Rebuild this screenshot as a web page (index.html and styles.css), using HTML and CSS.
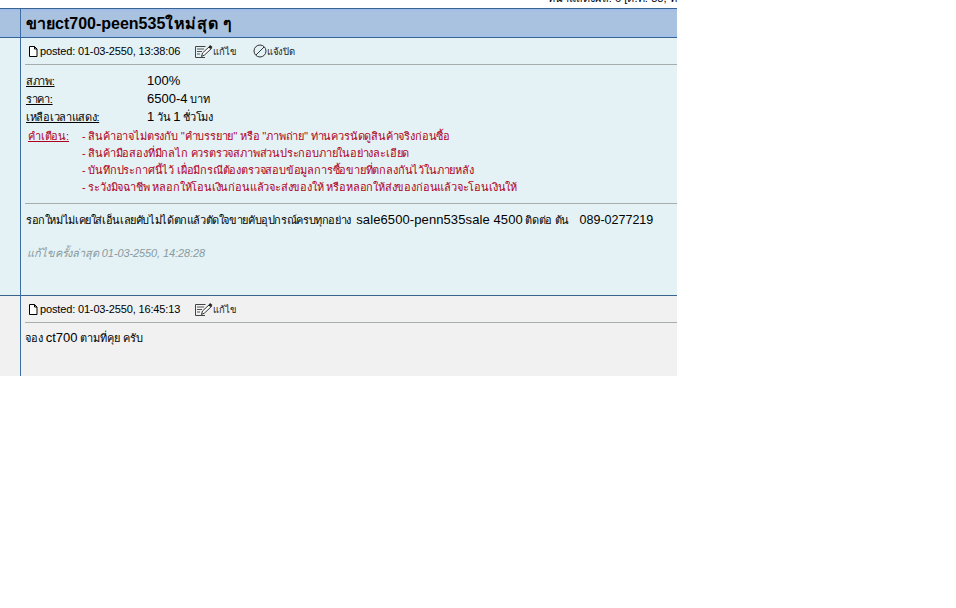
FILE: index.html
```html
<!DOCTYPE html>
<html lang="th">
<head>
    <meta charset="UTF-8">
    <meta name="viewport" content="width=device-width, initial-scale=1.0">
    <title>ขายct700-peen535ใหม่สุดๆ</title>
    <link rel="stylesheet" href="styles.css">
</head>
<body>
    <div class="board">
        <div class="page-info"><span>หน้าแสดงผล: 6 [ต.ค. 88, ท</span></div>

        <div class="row row-title">
            <div class="side"></div>
            <h1 class="title">ขายct700-peen535<span class="title-end">ใหม่สุด ๆ</span></h1>
        </div>

        <div class="row row-first">
            <div class="side"></div>
            <div class="post">
                <div class="post-head">
                    <svg class="icon-doc" width="10" height="11" viewBox="0 0 10 11"><path d="M1.5.5h5l2.5 2.5v7.5h-7.5z M6.5.5v2.5h2.5" fill="#fff" stroke="#000"/></svg>
                    <span class="posted">posted: 01-03-2550, 13:38:06</span>
                    <a class="action">
                        <svg width="18" height="15" viewBox="0 0 18 15"><path d="M.5 2.500h10M.5 2.500v11h9.500" fill="none" stroke="#444"/><path d="M2 5h7M2 7.500h5M2 10h3" stroke="#555"/><path d="M6.500 12.500l1-3.500 7-6.500 2 2-7 6.500z" fill="#fff" stroke="#333"/><path d="M13.500 3.500l1.500-2.500 2.500 2-2 2z" fill="#222"/></svg>
                        <span>แก้ไข</span>
                    </a>
                    <a class="action">
                        <svg width="14" height="14" viewBox="0 0 14 14"><circle cx="7" cy="7" r="6" fill="none" stroke="#333"/><path d="M3 11L11 3" stroke="#333"/></svg>
                        <span>แจ้งปิด</span>
                    </a>
                </div>

                <div class="details">
                    <div class="detail"><span class="label">สภาพ:</span><span><span class="latin">100%</span></span></div>
                    <div class="detail"><span class="label">ราคา:</span><span><span class="latin">6500-4</span> บาท</span></div>
                    <div class="detail"><span class="label">เหลือเวลาแสดง:</span><span><span class="latin">1</span> วัน <span class="latin">1</span> ชั่วโมง</span></div>
                </div>

                <div class="warning">
                    <span class="warning-label">คำเตือน:</span>
                    <ul class="warning-list">
                        <li>- สินค้าอาจไม่ตรงกับ ''คำบรรยาย'' หรือ ''ภาพถ่าย'' ท่านควรนัดดูสินค้าจริงก่อนซื้อ</li>
                        <li>- สินค้ามือสองที่มีกลไก ควรตรวจสภาพส่วนประกอบภายในอย่างละเอียด</li>
                        <li>- บันทึกประกาศนี้ไว้ เผื่อมีกรณีต้องตรวจสอบข้อมูลการซื้อขายที่ตกลงกันไว้ในภายหลัง</li>
                        <li>- ระวังมิจฉาชีพ หลอกให้โอนเงินก่อนแล้วจะส่งของให้ หรือหลอกให้ส่งของก่อนแล้วจะโอนเงินให้</li>
                    </ul>
                </div>

                <p class="message">รอกใหม่ไม่เคยใส่เอ็นเลยคับไม่ได้ตกแล้วตัดใจขายคับอุปกรณ์ครบทุกอย่าง&nbsp; <span class="latin">sale6500-penn535sale 4500</span> ติดต่อ ต้น&nbsp;&nbsp;&nbsp; <span class="latin phone">089-0277219</span></p>
                <p class="edited">แก้ไขครั้งล่าสุด 01-03-2550, 14:28:28</p>
            </div>
        </div>

        <div class="row row-reply">
            <div class="side"></div>
            <div class="post">
                <div class="post-head">
                    <svg class="icon-doc" width="10" height="11" viewBox="0 0 10 11"><path d="M1.5.5h5l2.5 2.5v7.5h-7.5z M6.5.5v2.5h2.5" fill="#fff" stroke="#000"/></svg>
                    <span class="posted">posted: 01-03-2550, 16:45:13</span>
                    <a class="action">
                        <svg width="18" height="15" viewBox="0 0 18 15"><path d="M.5 2.500h10M.5 2.500v11h9.500" fill="none" stroke="#444"/><path d="M2 5h7M2 7.500h5M2 10h3" stroke="#555"/><path d="M6.500 12.500l1-3.500 7-6.500 2 2-7 6.500z" fill="#fff" stroke="#333"/><path d="M13.500 3.500l1.500-2.500 2.500 2-2 2z" fill="#222"/></svg>
                        <span>แก้ไข</span>
                    </a>
                </div>
                <p class="reply-text">จอง <span class="latin">ct700</span> ตามที่คุย ครับ</p>
            </div>
        </div>
    </div>
</body>
</html>
```

FILE: styles.css
```css
body {
    margin: 0;
    background-color: #fff;
    color: #000;
    font-family: "Liberation Sans", Arial, sans-serif;
    font-size: 11px;
    letter-spacing: -0.3px;
}
.latin {
    font-size: 13px;
    letter-spacing: 0;
}
.board {
    width: 677px;
}
.page-info {
    height: 8px;
    overflow: hidden;
    text-align: right;
    line-height: 14px;
    letter-spacing: 0.1px;
}
.page-info span {
    display: block;
    margin-top: -9px;
}
.row {
    display: flex;
}
.side {
    flex: 0 0 20px;
    border-right: 1px solid #3a6ea5;
}
.row-title {
    height: 28px;
    border-top: 1px solid #3a6490;
    border-bottom: 1px solid #3a6490;
    background: linear-gradient(#a0bcee 0, #a9c2df 3px, #a9c2df 25px, #a0bff0 28px);
}
.title {
    margin: 0;
    padding-left: 5px;
    font-size: 16px;
    line-height: 29px;
    font-weight: bold;
    letter-spacing: 0;
}
.title-end {
    letter-spacing: 0.6px;
}
.row-first {
    height: 257px;
    background-color: #e4f2f5;
    border-bottom: 1px solid #3a6490;
}
.row-reply {
    height: 80px;
    background-color: #f1f1f1;
}
.post {
    flex: 1;
    padding-left: 4px;
    min-width: 0;
}
.post-head {
    display: flex;
    align-items: center;
    height: 26px;
    margin-bottom: 7px;
    border-bottom: 1px solid #a5adad;
    padding-left: 3px;
    white-space: nowrap;
}
.icon-doc {
    margin-right: 2px;
}
.posted {
    width: 155px;
    letter-spacing: -0.15px;
}
.action {
    display: flex;
    align-items: center;
    font-size: 9.5px;
    letter-spacing: -0.1px;
    color: #222;
    margin-right: 17px;
}
.details {
    padding-left: 1px;
}
.detail {
    display: flex;
    height: 18px;
    line-height: 18px;
}
.label {
    width: 121px;
    text-decoration: underline;
}
.warning {
    display: flex;
    color: #b00020;
    letter-spacing: -0.18px;
    padding: 2px 0 7px 3px;
    border-bottom: 1px solid #a5adad;
}
.warning-label {
    width: 54px;
    line-height: 17px;
    text-decoration: underline;
}
.warning-list {
    margin: 0;
    padding: 0;
    list-style: none;
}
.warning-list li {
    height: 17px;
    line-height: 17px;
}
.message {
    margin: 8px 0 0 1px;
    line-height: 16px;
    white-space: nowrap;
    letter-spacing: -0.38px;
}
.message .latin {
    letter-spacing: 0.1px;
}
.message .phone {
    font-size: 12.5px;
    letter-spacing: 0;
}
.edited {
    margin: 17px 0 0 2px;
    color: #8a9aa0;
    font-style: italic;
    letter-spacing: -0.1px;
    line-height: 16px;
}
.reply-text {
    margin: 2px 0 0;
    line-height: 16px;
    letter-spacing: -0.1px;
}
```
